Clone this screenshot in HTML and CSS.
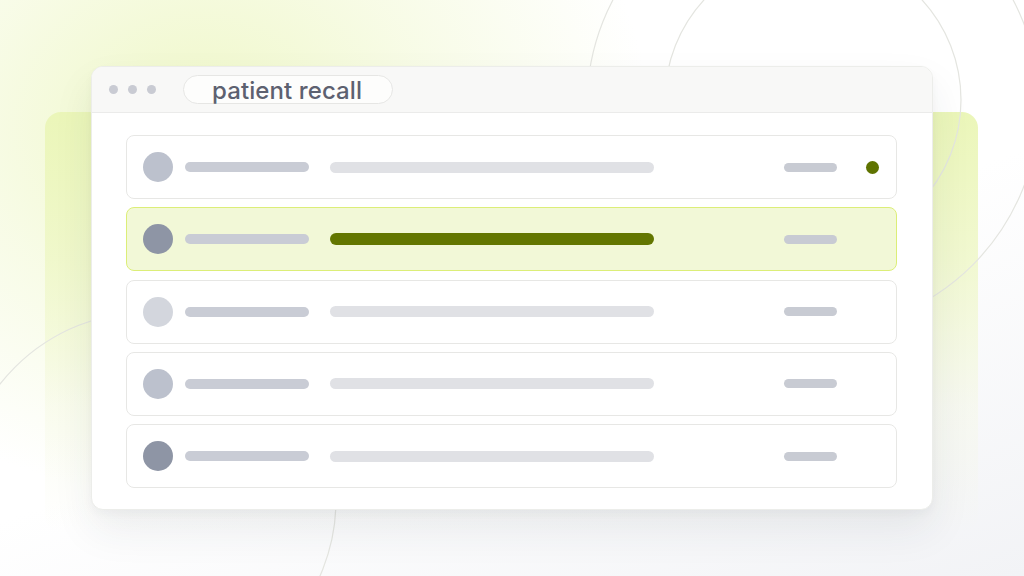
FILE: index.html
```html
<!DOCTYPE html>
<html>
<head>
  <title>Patient Recall</title>
<link rel="stylesheet" href="styles.css">
</head>
<body>
<div class="scene">
  <!-- background decoration -->
  <div class="glow"></div>
  <div class="backdrop"></div>
  <svg class="rings" width="1024" height="576" viewBox="0 0 1024 576">
    <circle cx="813" cy="105" r="226" />
    <circle cx="813" cy="100" r="148" />
    <circle cx="148" cy="500" r="188" />
  </svg>

  <div class="window">
    <div class="window-bar">
      <div class="dots">
        <span></span><span></span><span></span>
      </div>
      <div class="search-pill">patient recall</div>
    </div>

    <div class="list">
      <div class="row">
        <div class="avatar mid"></div>
        <div class="bar name"></div>
        <div class="bar detail"></div>
        <div class="bar date"></div>
        <div class="status on"></div>
      </div>
      <div class="row active">
        <div class="avatar dark"></div>
        <div class="bar name"></div>
        <div class="bar detail"></div>
        <div class="bar date"></div>
        <div class="status"></div>
      </div>
      <div class="row">
        <div class="avatar light"></div>
        <div class="bar name"></div>
        <div class="bar detail"></div>
        <div class="bar date"></div>
        <div class="status"></div>
      </div>
      <div class="row">
        <div class="avatar mid"></div>
        <div class="bar name"></div>
        <div class="bar detail"></div>
        <div class="bar date"></div>
        <div class="status"></div>
      </div>
      <div class="row">
        <div class="avatar dark"></div>
        <div class="bar name"></div>
        <div class="bar detail"></div>
        <div class="bar date"></div>
        <div class="status"></div>
      </div>
    </div>
  </div>
</div>
</body>
</html>
```

FILE: styles.css
```css
* {
  box-sizing: border-box;
  margin: 0;
  padding: 0;
}

body {
  font-family: 'Inter', 'Noto Sans', sans-serif;
  background: #fff;
  width: 1024px;
  height: 576px;
  overflow: hidden;
}

.scene {
  position: relative;
  width: 1024px;
  height: 576px;
  overflow: hidden;
  padding: 66px 0 0 91px;
  background: linear-gradient(160deg, #ffffff 55%, #f2f3f6 100%);
}

/* Background decoration */
.glow {
  position: absolute;
  left: -250px;
  top: -250px;
  width: 900px;
  height: 750px;
  background: radial-gradient(closest-side, rgba(236, 246, 190, 0.85), rgba(240, 248, 205, 0.5) 50%, rgba(255, 255, 255, 0) 100%);
}

.backdrop {
  position: absolute;
  left: 45px;
  top: 112px;
  width: 933px;
  height: 420px;
  border-radius: 16px;
  background: linear-gradient(to bottom, #ebf6b9 0%, rgba(238, 247, 197, 0.8) 35%, rgba(243, 247, 220, 0.35) 70%, rgba(255, 255, 255, 0) 100%);
}

.rings {
  position: absolute;
  left: 0;
  top: 0;
}

.rings circle {
  fill: none;
  stroke: #e4e5e0;
  stroke-width: 1.2;
}

/* Window */
.window {
  position: relative;
  width: 842px;
  height: 444px;
  background: #fff;
  border: 1px solid #ecedea;
  border-radius: 12px;
  box-shadow: 0 20px 40px rgba(40, 45, 60, 0.08), 0 4px 10px rgba(40, 45, 60, 0.03);
  overflow: hidden;
}

.window-bar {
  height: 46px;
  background: #f8f8f7;
  border-bottom: 1px solid #ebebea;
  display: flex;
  align-items: center;
  padding-left: 17px;
}

.dots {
  display: flex;
  gap: 10px;
}

.dots span {
  width: 9px;
  height: 9px;
  border-radius: 50%;
  background: #c9cbd3;
}

.search-pill {
  margin-left: 27px;
  width: 210px;
  height: 29px;
  line-height: 29px;
  padding-left: 28px;
  border: 1px solid #e6e6e4;
  border-radius: 15px;
  background: #fdfdfc;
  color: #5d6170;
  font-size: 24px;
  font-weight: 500;
  letter-spacing: 0.1px;
  white-space: nowrap;
}

.list {
  display: flex;
  flex-direction: column;
  gap: 8.25px;
  padding: 22px 35px 0 34px;
}

.row {
  height: 64px;
  display: flex;
  align-items: center;
  padding: 0 17px 0 16px;
  border: 1px solid #e7e7e5;
  border-radius: 8px;
  background: #fff;
}

.row.active {
  background: #f2f8d7;
  border-color: #dcee78;
}

.avatar {
  width: 30px;
  height: 30px;
  border-radius: 50%;
  flex-shrink: 0;
}

.avatar.light { background: #d3d6dd; }
.avatar.mid { background: #bcc1cd; }
.avatar.dark { background: #8e95a5; }

.bar {
  border-radius: 6px;
  flex-shrink: 0;
}

.bar.name {
  margin-left: 12px;
  width: 124px;
  height: 10px;
  background: #c9ccd5;
}

.bar.detail {
  margin-left: 21px;
  width: 324px;
  height: 11px;
  background: #e0e1e5;
}

.row.active .bar.detail {
  background: #637600;
  height: 12px;
}

.bar.date {
  margin-left: auto;
  width: 53px;
  height: 9px;
  background: #c8cbd3;
}

.status {
  margin-left: 29px;
  width: 13px;
  height: 13px;
  border-radius: 50%;
}

.status.on {
  background: #5f7300;
}
```
